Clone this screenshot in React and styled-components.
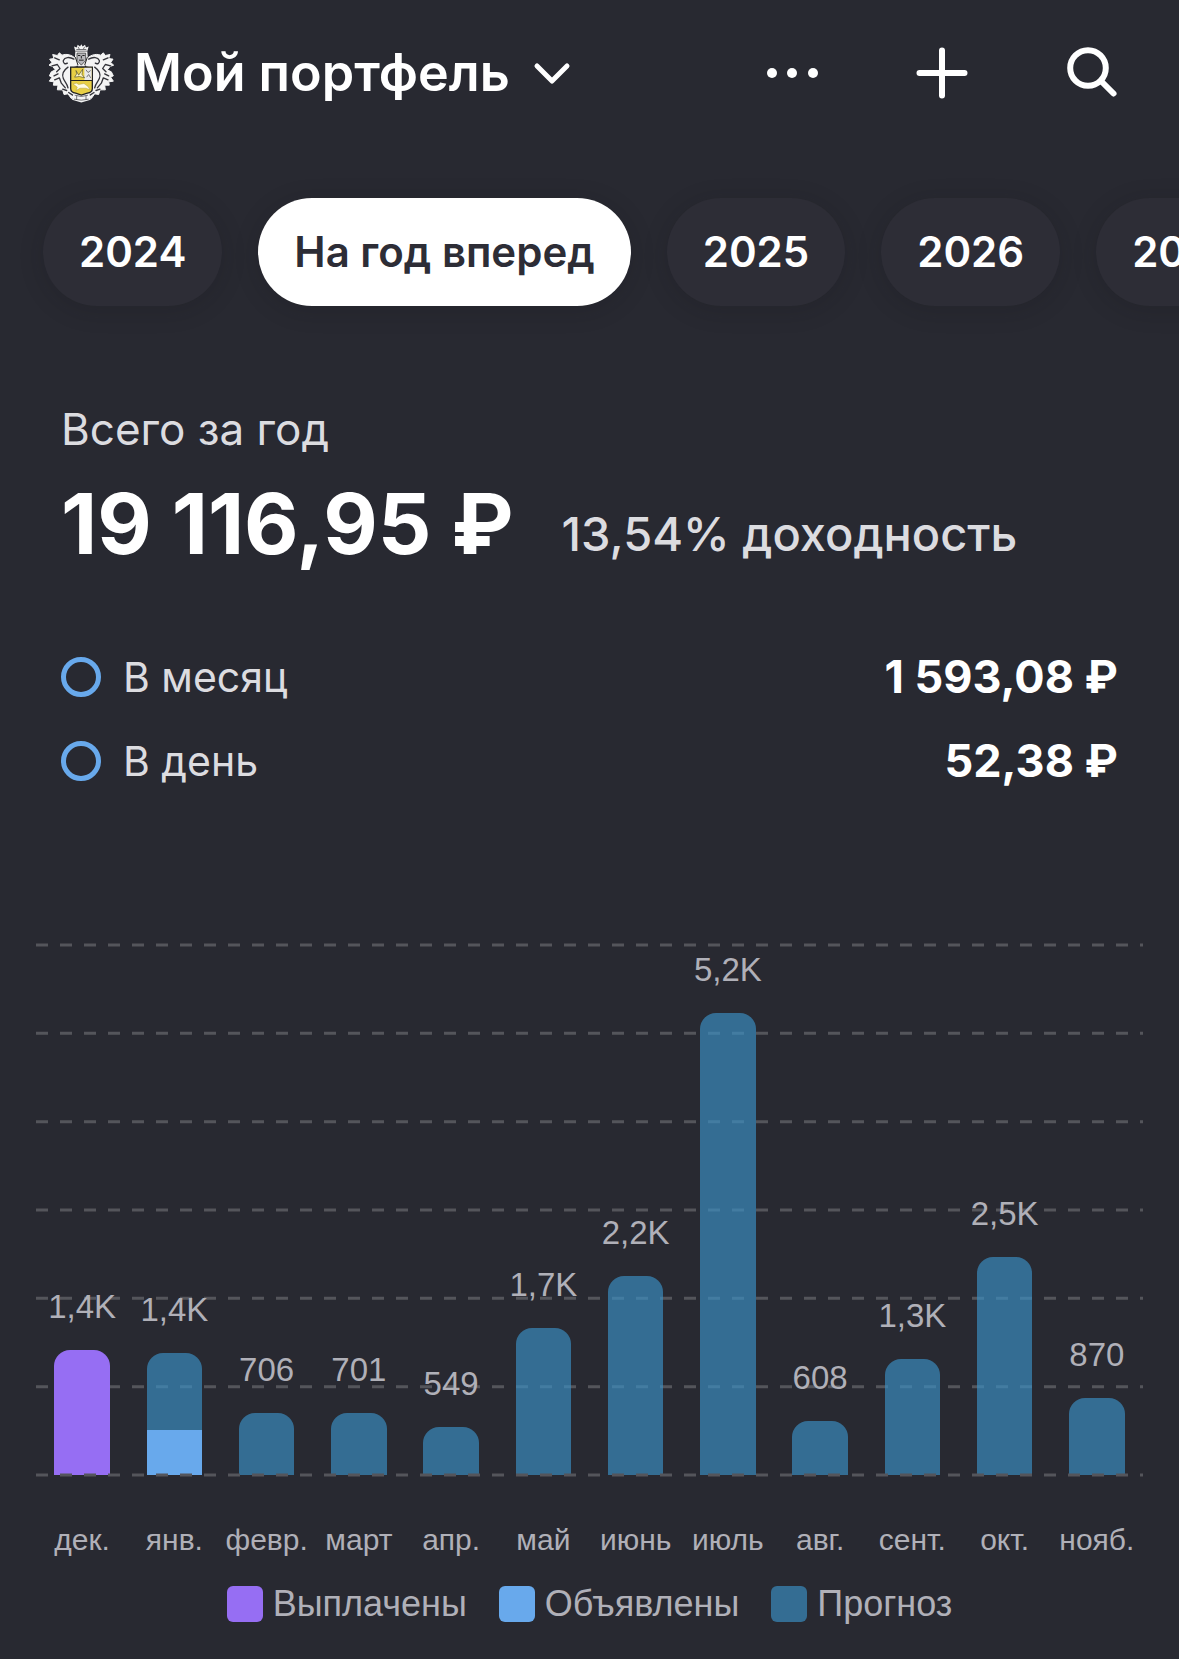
import React, { useState } from 'react';
import styled, { createGlobalStyle } from 'styled-components';

const MAX_VALUE = 6000;
const GRID_STEPS = [0, 1, 2, 3, 4, 5];

const periods = ['2024', 'На год вперед', '2025', '2026', '2027'];

const averages = [
  { name: 'В месяц', value: '1 593,08 ₽' },
  { name: 'В день', value: '52,38 ₽' },
];

const colors = {
  paid: '#966ef3',
  announced: '#68a9ec',
  forecast: 'rgba(58, 146, 200, 0.65)',
};

const legend = [
  { type: 'paid', name: 'Выплачены' },
  { type: 'announced', name: 'Объявлены' },
  { type: 'forecast', name: 'Прогноз' },
];

// parts go from the top of the bar to the bottom
const months = [
  { name: 'дек.', label: '1,4K', parts: [['paid', 1415]] },
  { name: 'янв.', label: '1,4K', parts: [['forecast', 868], ['announced', 510]] },
  { name: 'февр.', label: '706', parts: [['forecast', 706]] },
  { name: 'март', label: '701', parts: [['forecast', 701]] },
  { name: 'апр.', label: '549', parts: [['forecast', 549]] },
  { name: 'май', label: '1,7K', parts: [['forecast', 1664]] },
  { name: 'июнь', label: '2,2K', parts: [['forecast', 2253]] },
  { name: 'июль', label: '5,2K', parts: [['forecast', 5230]] },
  { name: 'авг.', label: '608', parts: [['forecast', 608]] },
  { name: 'сент.', label: '1,3K', parts: [['forecast', 1313]] },
  { name: 'окт.', label: '2,5K', parts: [['forecast', 2468]] },
  { name: 'нояб.', label: '870', parts: [['forecast', 870]] },
];

const LeafSide = () => (
  <g fill="#f4f4f4" stroke="#f4f4f4" strokeWidth="3" strokeLinejoin="round">
    <path d="M138 88 C130 72 108 66 94 72 L86 65 L80 73 L66 70 L70 82 L57 84 L64 94 L55 102 L66 106 L74 116 L62 122 L56 134 L64 138 L56 150 L70 152 L68 162 L82 162 L80 176 L96 176 L100 190 L112 188 L122 202 L136 196 L152 210 L152 184 L120 172 L118 108 L138 104 Z" />
    <g fill="none" stroke="#34343a" strokeWidth="4" strokeLinecap="round">
      <path d="M130 84 C116 76 102 78 98 88 C96 96 104 100 110 96" />
      <path d="M72 80 L86 86 M64 104 L80 100 L88 112 L78 122" />
      <path d="M112 108 C98 118 92 128 98 142 C102 152 110 158 112 170" />
      <path d="M70 134 L82 128 M72 146 L86 140 L92 156 L104 170" />
      <path d="M96 174 L108 178 M114 184 L126 192" />
    </g>
  </g>
);

const Emblem = () => (
  <svg width="66" height="61" viewBox="52 36 198 182" aria-hidden="true">
    <LeafSide />
    <g transform="translate(304 0) scale(-1 1)">
      <LeafSide />
    </g>
    <path d="M128 190 H176 L180 206 L152 214 L124 206 Z" fill="#f4f4f4" />
    <path d="M132 192 Q152 200 172 192 M130 204 Q152 210 174 204 M138 194 V206 M166 194 V206" fill="none" stroke="#34343a" strokeWidth="2" />
    <path d="M134 60 L130 46 L138 49 L141 41 L148 46 L152 39 L156 46 L163 41 L166 49 L174 46 L170 60 L172 90 L162 106 H142 L132 90 Z" fill="#f4f4f4" />
    <path d="M134 60 H170 M137 55 H167 M142 47 L146 54 M162 47 L158 54" stroke="#34343a" strokeWidth="2" fill="none" />
    <path d="M139 66 H165 V88 L152 102 L139 88 Z" fill="#b9b9bd" stroke="#222" strokeWidth="2" />
    <path d="M142 73 H149 M155 73 H162 M152 74 V82 M145 87 H159 M134 78 L142 102 M170 78 L162 102" stroke="#222" strokeWidth="3" fill="none" />
    <path d="M120 108 H185 V172 Q185 184 170 186 L152 192 L135 186 Q120 184 120 172 Z" fill="#e8cf45" stroke="#222" strokeWidth="4" />
    <path d="M161 110 H183 V147 H161 Z" fill="#e9e9ea" />
    <path d="M121 148 H184" stroke="#222" strokeWidth="3" />
    <path d="M132 138 L138 128 L136 118 L144 132 L156 114 L154 130 L162 140 L146 136 Z" fill="#fff8c8" stroke="#55502a" strokeWidth="2" />
    <path d="M166 116 L172 124 L180 118 M168 138 L174 130 L180 140" stroke="#77777a" strokeWidth="3" fill="none" />
    <path d="M127 158 L138 156 L144 160 L160 157 L172 166 L178 176 L166 171 L148 171 L136 178 L140 168 Z" fill="#fffbe0" stroke="#8d7d28" strokeWidth="1" />
  </svg>
);

const ChevronIcon = () => (
  <svg width="40" height="24" viewBox="0 0 40 24" fill="none" aria-hidden="true">
    <path d="M5 5 L20 20 L35 5" stroke="#fff" strokeWidth="5" strokeLinecap="round" strokeLinejoin="round" />
  </svg>
);

const DotsIcon = () => (
  <svg width="52" height="52" viewBox="0 0 52 52" fill="#fff" aria-hidden="true">
    <circle cx="6" cy="26" r="5" />
    <circle cx="26" cy="26" r="5" />
    <circle cx="47" cy="26" r="5" />
  </svg>
);

const PlusIcon = () => (
  <svg width="52" height="52" viewBox="0 0 52 52" fill="none" aria-hidden="true">
    <path d="M26 3.500 V48.500 M3.500 26 H48.500" stroke="#fff" strokeWidth="6" strokeLinecap="round" />
  </svg>
);

const SearchIcon = () => (
  <svg width="52" height="52" viewBox="0 0 52 52" fill="none" stroke="#fff" strokeWidth="6" aria-hidden="true">
    <circle cx="22" cy="21" r="17.8" />
    <path d="M36 35 L47.500 46.500" strokeLinecap="round" />
  </svg>
);

const Chart = () => (
  <ChartSection aria-label="Выплаты по месяцам">
    <Plot>
      <GridLines aria-hidden="true">
        {GRID_STEPS.map((step) => (
          <line key={step} x1="0" x2="100%" y1={`${(step / 6) * 100}%`} y2={`${(step / 6) * 100}%`} />
        ))}
      </GridLines>
      <Columns>
        {months.map((month) => (
          <Column key={month.name}>
            <BarLabel>{month.label}</BarLabel>
            <Bar style={{ height: `${(month.parts.reduce((sum, part) => sum + part[1], 0) / MAX_VALUE) * 100}%` }}>
              {month.parts.map(([type, value]) => (
                <BarPart key={type} $type={type} style={{ flexGrow: value }} />
              ))}
            </Bar>
          </Column>
        ))}
      </Columns>
      <GridLines aria-hidden="true">
        <line x1="0" x2="100%" y1="100%" y2="100%" />
      </GridLines>
    </Plot>
    <Months>
      {months.map((month) => (
        <Month key={month.name}>{month.name}</Month>
      ))}
    </Months>
    <Legend>
      {legend.map((item) => (
        <LegendItem key={item.type}>
          <Swatch $type={item.type} />
          {item.name}
        </LegendItem>
      ))}
    </Legend>
  </ChartSection>
);

const App = () => {
  const [period, setPeriod] = useState('На год вперед');

  return (
    <Page>
      <GlobalStyle />
      <Header>
        <PortfolioButton type="button">
          <Emblem />
          <Title>Мой портфель</Title>
          <ChevronIcon />
        </PortfolioButton>
        <Actions>
          <IconButton type="button" aria-label="Ещё"><DotsIcon /></IconButton>
          <IconButton type="button" aria-label="Добавить"><PlusIcon /></IconButton>
          <IconButton type="button" aria-label="Поиск"><SearchIcon /></IconButton>
        </Actions>
      </Header>
      <Periods>
        {periods.map((name) => (
          <Chip key={name} type="button" $active={name === period} onClick={() => setPeriod(name)}>
            {name}
          </Chip>
        ))}
      </Periods>
      <Summary>
        <Caption>Всего за год</Caption>
        <Total>
          <Amount>19 116,95 ₽</Amount>
          <Yield>13,54% доходность</Yield>
        </Total>
        <Averages>
          {averages.map((item) => (
            <Average key={item.name}>
              <Ring />
              <AverageName>{item.name}</AverageName>
              <AverageValue>{item.value}</AverageValue>
            </Average>
          ))}
        </Averages>
      </Summary>
      <Chart />
    </Page>
  );
};
export default App;

const GlobalStyle = createGlobalStyle`
  * {
    box-sizing: border-box;
  }
  body {
    margin: 0;
    background: #282931;
    color: #fff;
    font-family: Inter, "Liberation Sans", sans-serif;
  }
  button {
    border: 0;
    padding: 0;
    background: none;
    color: inherit;
    font-family: inherit;
    cursor: pointer;
  }
`;

const Page = styled.div`
  overflow: hidden;
`;

const Header = styled.header`
  display: flex;
  justify-content: space-between;
  align-items: center;
  height: 146px;
  padding: 0 61px 0 48px;
`;

const PortfolioButton = styled.button`
  display: flex;
  align-items: center;
  gap: 20px;
`;

const Title = styled.span`
  padding-right: 2px;
  font-size: 52px;
  line-height: 64px;
  font-weight: 600;
  white-space: nowrap;
`;

const Actions = styled.div`
  display: flex;
  gap: 98px;
`;

const IconButton = styled.button`
  display: flex;
`;

const Periods = styled.nav`
  display: flex;
  gap: 36px;
  margin-top: 52px;
  padding-left: 43px;
`;

const Chip = styled.button`
  flex: none;
  height: 108px;
  padding: 0 36px 2px;
  border-radius: 54px;
  background: ${(props) => (props.$active ? '#fff' : '#2d2d36')};
  color: ${(props) => (props.$active ? '#2d2d36' : '#fff')};
  font-size: 42px;
  font-weight: 600;
  white-space: nowrap;
  box-shadow: 0 4px 24px rgba(20, 20, 24, 0.2);
`;

const Summary = styled.section`
  padding: 0 61px;
  margin-top: 95px;
`;

const Caption = styled.div`
  color: #dcdce0;
  font-size: 44px;
  line-height: 56px;
`;

const Total = styled.div`
  display: flex;
  align-items: flex-end;
  gap: 48px;
  margin-top: 20px;
  white-space: nowrap;
`;

const Amount = styled.strong`
  font-size: 84px;
  line-height: 94px;
  font-weight: 700;
`;

const Yield = styled.span`
  color: #dcdce0;
  font-size: 47px;
  line-height: 74px;
  font-weight: 500;
`;

const Averages = styled.ul`
  display: flex;
  flex-direction: column;
  gap: 32px;
  margin: 80px 0 0;
  padding: 0;
  list-style: none;
`;

const Average = styled.li`
  display: flex;
  align-items: center;
  line-height: 52px;
`;

const Ring = styled.span`
  width: 40px;
  height: 40px;
  border: 5px solid #68a9ec;
  border-radius: 50%;
`;

const AverageName = styled.span`
  flex: 1;
  margin-left: 22px;
  color: #dcdce0;
  font-size: 41px;
`;

const AverageValue = styled.span`
  font-size: 45px;
  font-weight: 700;
`;

const ChartSection = styled.section`
  margin-top: 158px;
  padding: 0 36px 37px;
  color: #b0b0b8;
  font-family: "Liberation Sans", Arial, sans-serif;
`;

const Plot = styled.div`
  position: relative;
  height: 530px;
`;

const GridLines = styled.svg`
  position: absolute;
  inset: 0;
  width: 100%;
  height: 100%;
  overflow: visible;
  stroke: #54555b;
  stroke-width: 3px;
  stroke-dasharray: 12 12;
`;

const Columns = styled.div`
  position: relative;
  display: grid;
  grid-template-columns: repeat(12, 1fr);
  height: 100%;
`;

const Column = styled.div`
  display: flex;
  flex-direction: column;
  justify-content: flex-end;
  align-items: center;
`;

const BarLabel = styled.span`
  margin-bottom: 24px;
  font-size: 33px;
  line-height: 38px;
`;

const Bar = styled.div`
  display: flex;
  flex-direction: column;
  flex-shrink: 0;
  width: 60%;
  border-radius: 16px 16px 0 0;
  overflow: hidden;
`;

const BarPart = styled.div`
  flex-basis: 0;
  background: ${(props) => colors[props.$type]};
`;

const Months = styled.div`
  display: grid;
  grid-template-columns: repeat(12, 1fr);
  margin-top: 47px;
`;

const Month = styled.span`
  font-size: 30px;
  line-height: 36px;
  text-align: center;
`;

const Legend = styled.ul`
  display: flex;
  justify-content: center;
  gap: 32px;
  margin: 27px 0 0;
  padding: 0;
  list-style: none;
`;

const LegendItem = styled.li`
  display: flex;
  align-items: center;
  gap: 10px;
  font-size: 36px;
  line-height: 38px;
`;

const Swatch = styled.span`
  width: 36px;
  height: 36px;
  border-radius: 6px;
  background: ${(props) => colors[props.$type]};
`;
